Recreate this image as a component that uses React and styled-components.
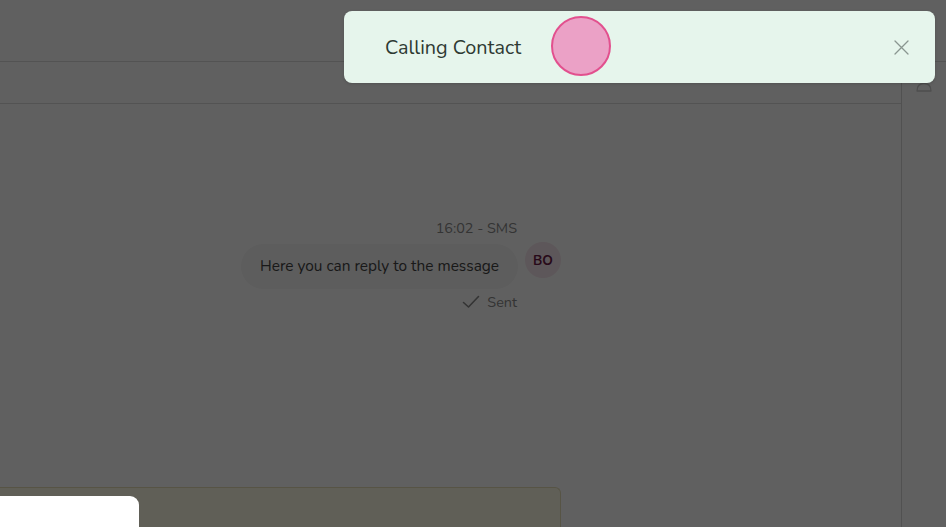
import React from "react";
import styled, { createGlobalStyle } from "styled-components";

const Global = createGlobalStyle`
  html, body { margin: 0; padding: 0; }
  body { font-family: "Nunito", "Lato", "Noto Sans", sans-serif; overflow: hidden; }
  * { box-sizing: border-box; }
`;

const Page = styled.div`
  position: relative;
  width: 946px;
  height: 527px;
  background: #ffffff;
  display: flex;
  flex-direction: column;
  overflow: hidden;
`;

const Header = styled.header`
  height: 62px;
  flex-shrink: 0;
  border-bottom: 1px solid #dcdcdc;
`;

const Body = styled.div`
  flex: 1;
  display: flex;
  min-height: 0;
`;

const Main = styled.main`
  flex: 1;
  display: flex;
  flex-direction: column;
  min-width: 0;
`;

const SubHeader = styled.div`
  height: 42px;
  flex-shrink: 0;
  border-bottom: 1px solid #dcdcdc;
`;

const Thread = styled.div`
  flex: 1;
  display: flex;
  flex-direction: column;
  width: 561px;
  align-items: flex-end;
  padding-top: 114px;
`;

const Meta = styled.div`
  font-size: 14.4px;
  color: #8a8a8a;
  padding-right: 44px;
  line-height: 20px;
`;

const MessageRow = styled.div`
  display: flex;
  align-items: flex-start;
  gap: 7px;
  margin-top: 4px;
`;

const Bubble = styled.div`
  background: #f6f6f6;
  border-radius: 23px;
  padding: 12px 19px 13px 19px;
  margin-top: 2px;
  font-size: 15.4px;
  color: #444;
  line-height: 20px;
`;

const Avatar = styled.div`
  width: 36px;
  height: 36px;
  border-radius: 50%;
  background: #f8e6ee;
  color: #6b1a45;
  font-weight: 700;
  font-size: 13.5px;
  display: flex;
  align-items: center;
  justify-content: center;
`;

const Status = styled.div`
  display: flex;
  align-items: center;
  gap: 7px;
  font-size: 14.4px;
  line-height: 20px;
  color: #8a8a8a;
  padding-right: 44px;
  margin-top: 3px;
`;

const Composer = styled.div`
  width: 571px;
  height: 40px;
  margin-left: -10px;
  flex-shrink: 0;
  background: #fffbe8;
  border: 1px solid #e6dfb8;
  border-bottom: none;
  border-radius: 0 6px 0 0;
`;

const Sidebar = styled.aside`
  width: 45px;
  flex-shrink: 0;
  border-left: 1px solid #d6d6d6;
  display: flex;
  justify-content: center;
  align-items: flex-start;
  padding-top: 8px;
  color: #cfcfcf;
`;

const Overlay = styled.div`
  position: absolute;
  inset: 0;
  background: rgba(0, 0, 0, 0.625);
`;

const Toast = styled.div`
  position: absolute;
  top: 11px;
  left: 344px;
  width: 591px;
  height: 72px;
  background: #e6f5ec;
  border-radius: 8px;
  display: flex;
  align-items: center;
  justify-content: space-between;
  padding: 0 26px 0 41px;
  box-shadow: 0 1px 3px rgba(0, 0, 0, 0.15);
`;

const ToastText = styled.span`
  font-size: 19.8px;
  color: #2e3a33;
`;

const CloseButton = styled.button`
  border: none;
  background: none;
  padding: 0;
  display: flex;
  color: #8a9690;
  cursor: pointer;
`;

const ClickMarker = styled.div`
  position: absolute;
  left: 551px;
  top: 16px;
  width: 60px;
  height: 60px;
  border-radius: 50%;
  background: #eba1c6;
  border: 2px solid #e2508e;
`;

const Popover = styled.div`
  position: absolute;
  left: -10px;
  top: 496px;
  width: 149px;
  height: 60px;
  background: #ffffff;
  border-radius: 0 9px 0 0;
`;

const Check = () => (
  <svg width="18" height="14" viewBox="0 0 18 14" fill="none">
    <path d="M1.5 7.5 L6.5 12 L16.5 1.5" stroke="currentColor" strokeWidth="1.6" strokeLinecap="round" strokeLinejoin="round" />
  </svg>
);

const UserIcon = () => (
  <svg width="16" height="22" viewBox="0 0 16 22" fill="none">
    <circle cx="8" cy="6" r="4.5" stroke="currentColor" strokeWidth="1.3" />
    <path d="M1 21 C1 16 4 13.5 8 13.5 C12 13.5 15 16 15 21 Z" stroke="currentColor" strokeWidth="1.3" strokeLinejoin="round" />
  </svg>
);

const CloseIcon = () => (
  <svg width="15" height="15" viewBox="0 0 15 15" fill="none">
    <path d="M1 1 L14 14 M14 1 L1 14" stroke="currentColor" strokeWidth="1.3" strokeLinecap="round" />
  </svg>
);

export default function App() {
  return (
    <>
      <Global />
      <Page>
        <Header />
        <Body>
          <Main>
            <SubHeader />
            <Thread>
              <Meta>16:02 - SMS</Meta>
              <MessageRow>
                <Bubble>Here you can reply to the message</Bubble>
                <Avatar>BO</Avatar>
              </MessageRow>
              <Status>
                <Check />
                Sent
              </Status>
            </Thread>
            <Composer />
          </Main>
          <Sidebar>
            <UserIcon />
          </Sidebar>
        </Body>
        <Overlay />
        <Toast>
          <ToastText>Calling Contact</ToastText>
          <CloseButton aria-label="Close">
            <CloseIcon />
          </CloseButton>
        </Toast>
        <ClickMarker />
        <Popover />
      </Page>
    </>
  );
}
